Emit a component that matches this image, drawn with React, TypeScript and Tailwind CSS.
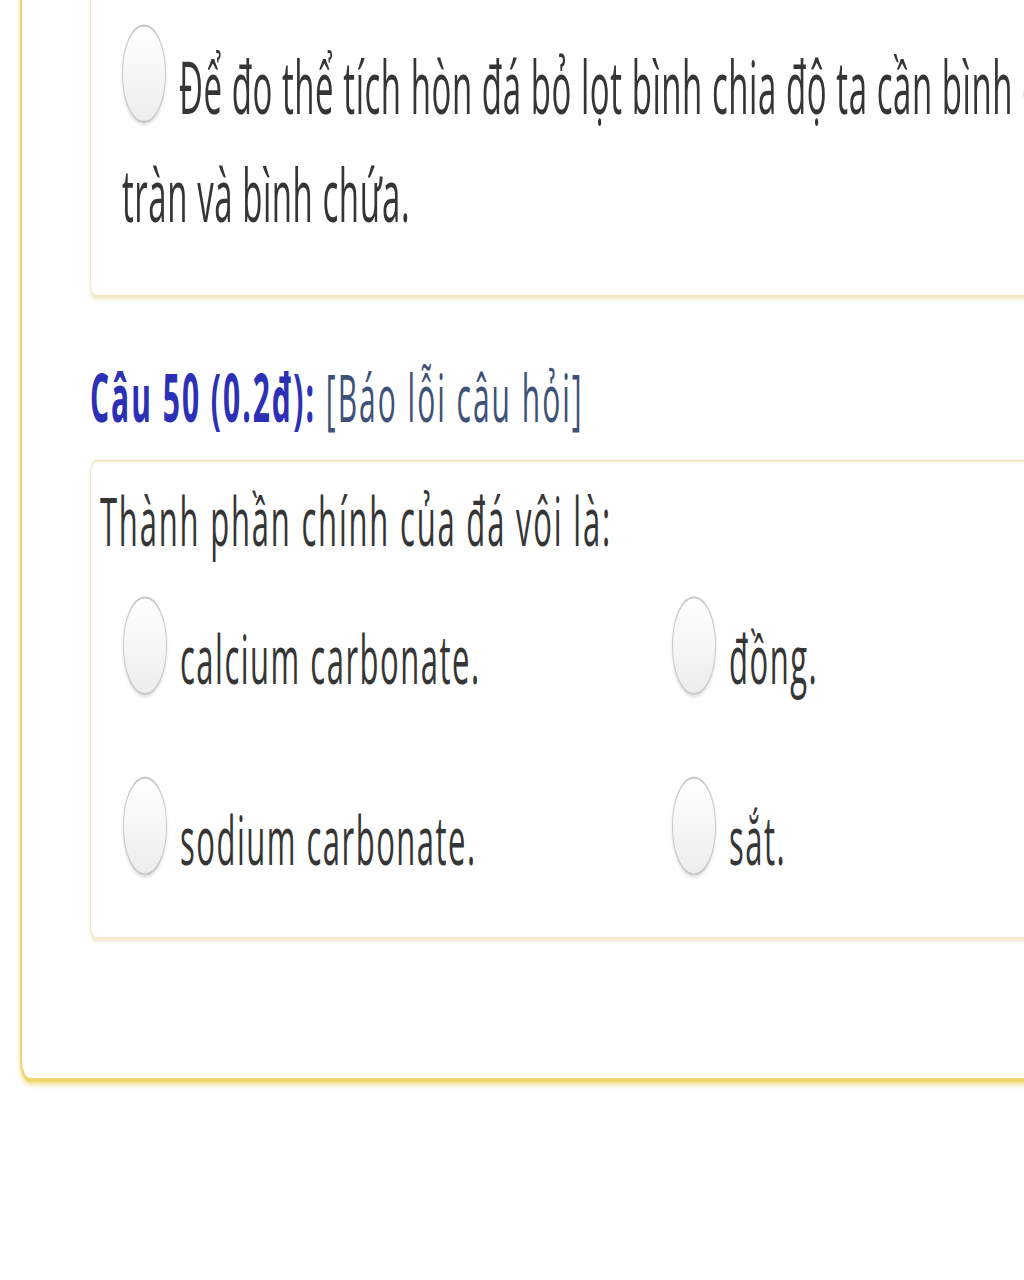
import React from "react";

function Radio({ className = "" }: { className?: string }) {
  return (
    <span
      className={
        "block w-[44px] h-[45px] shrink-0 rounded-full border border-[#c9c9c9] bg-linear-to-b from-white to-[#ededed] shadow-[0_1px_2px_rgba(0,0,0,0.12)] " +
        className
      }
    />
  );
}

function Option({ label }: { label: string }) {
  return (
    <div className="flex items-start">
      <Radio className="mr-[13px]" />
      <span className="pt-[6px] leading-[45px] whitespace-nowrap tracking-[1.5px]">{label}</span>
    </div>
  );
}

export default function App() {
  return (
    <div className="w-[1024px] h-[1280px] overflow-hidden bg-white">
      <div
        className="flow-root origin-top-left scale-y-[2.2] w-[1024px] h-[582px] text-[#353535]"
        style={{ fontFamily: "'Open Sans', 'Liberation Sans', sans-serif" }}
      >
        <div className="ml-[20px] -mt-[60px] w-[1100px] border-2 border-[#eed66c] rounded-[10px] shadow-[0_1px_3px_rgba(232,200,60,0.55)] pl-[68px] pt-[18px] pb-[63px]">
          {/* previous question card */}
          <div className="w-[1100px] border border-[#f3e8c6] rounded-[6px] shadow-[0_1px_2px_rgba(230,210,150,0.45)] pl-[31px] pt-[54px] pb-[21px] text-[33px] leading-[49px] tracking-[0.55px]">
            <div className="flex items-start">
              <Radio className="-mt-[4px] mr-[13px]" />
              <span className="whitespace-nowrap">
                Để đo thể tích hòn đá bỏ lọt bình chia độ ta cần bình chia độ, bình
              </span>
            </div>
            <div className="whitespace-nowrap">tràn và bình chứa.</div>
          </div>

          {/* title */}
          <div className="mt-[26px] text-[30px] leading-[40px] whitespace-nowrap tracking-[2px]">
            <span className="font-bold text-[#2c30b6]">Câu 50 (0.2đ):</span>{" "}
            <span className="text-[#3e5278]">[Báo lỗi câu hỏi]</span>
          </div>

          {/* question card */}
          <div className="mt-[8px] w-[1100px] border border-[#f3e8c6] rounded-[6px] shadow-[0_1px_2px_rgba(230,210,150,0.45)] pt-[6px] pb-[22px] text-[31px]">
            <div className="pl-[9px] leading-[40px] whitespace-nowrap tracking-[1.8px]">
              Thành phần chính của đá vôi là:
            </div>
            <div className="mt-[15px] pl-[32px] grid grid-cols-[549px_549px] gap-y-[31px]">
              <Option label="calcium carbonate." />
              <Option label="đồng." />
              <Option label="sodium carbonate." />
              <Option label="sắt." />
            </div>
          </div>
        </div>
      </div>
    </div>
  );
}
